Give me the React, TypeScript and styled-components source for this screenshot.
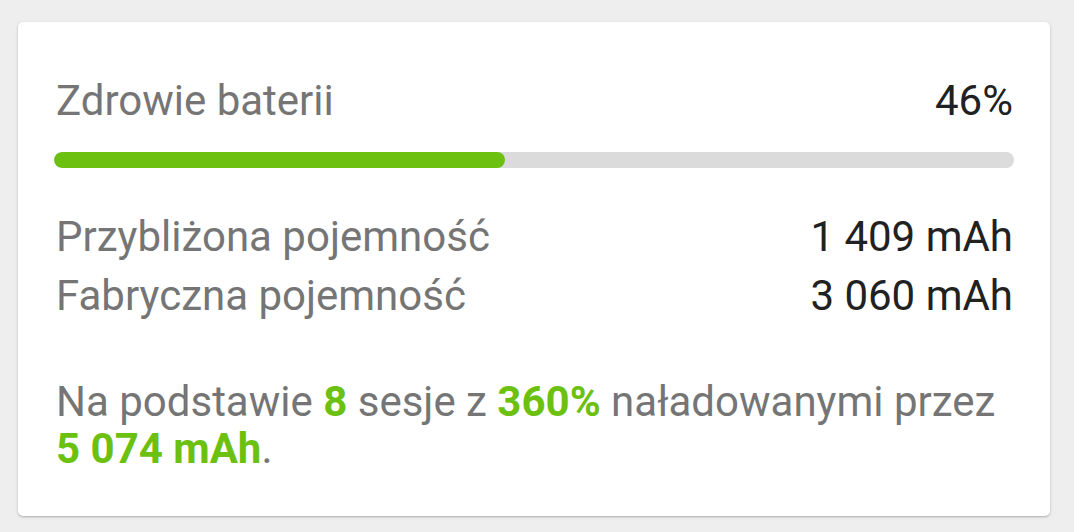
import styled, { createGlobalStyle } from "styled-components";

const GlobalStyle = createGlobalStyle`
  html, body {
    margin: 0;
    padding: 0;
    background: #eeeeee;
  }
  body {
    font-family: Roboto, "Noto Sans", sans-serif;
  }
`;

const stats = [
  { label: "Przybliżona pojemność", value: "1 409 mAh" },
  { label: "Fabryczna pojemność", value: "3 060 mAh" },
];

const health = 47;

export default function App() {
  return (
    <>
      <GlobalStyle />
      <Page>
        <Card>
          <Row>
            <Label>Zdrowie baterii</Label>
            <Value>46%</Value>
          </Row>
          <Track>
            <Fill style={{ width: `${health}%` }} />
          </Track>
          <Stats>
            {stats.map((s) => (
              <StatRow key={s.label}>
                <Label>{s.label}</Label>
                <Value>{s.value}</Value>
              </StatRow>
            ))}
          </Stats>
          <Summary>
            Na podstawie <Accent>8</Accent> sesje z <Accent>360%</Accent>{" "}
            naładowanymi przez <Accent>5 074 mAh</Accent>.
          </Summary>
        </Card>
      </Page>
    </>
  );
}

const Page = styled.div`
  width: 1074px;
  height: 532px;
  padding: 22px 24px 0 18px;
  box-sizing: border-box;
`;

const Card = styled.div`
  width: 1032px;
  height: 494px;
  box-sizing: border-box;
  background: #ffffff;
  border-radius: 5px;
  box-shadow: 0 1px 3px rgba(0, 0, 0, 0.22), 0 1px 1px rgba(0, 0, 0, 0.08);
  padding: 54px 36px 0 36px;
  display: flex;
  flex-direction: column;
`;

const Row = styled.div`
  display: flex;
  justify-content: space-between;
  align-items: baseline;
  font-size: 42px;
  line-height: 49px;
  padding: 0 1px 0 2px;
`;

const StatRow = styled(Row)`
  line-height: 59px;
`;

const Label = styled.span`
  color: #757575;
`;

const Value = styled.span`
  color: #212121;
`;

const Track = styled.div`
  margin-top: 27px;
  height: 16px;
  border-radius: 8px;
  background: #dbdbdb;
  overflow: hidden;
`;

const Fill = styled.div`
  height: 100%;
  border-radius: 8px;
  background: #6cc010;
`;

const Stats = styled.div`
  margin-top: 39px;
  display: flex;
  flex-direction: column;
`;

const Summary = styled.p`
  margin: 53px 0 0 0;
  padding: 0 2px;
  font-size: 42px;
  line-height: 47px;
  color: #757575;
`;

const Accent = styled.b`
  color: #6cc010;
  font-weight: 700;
`;
